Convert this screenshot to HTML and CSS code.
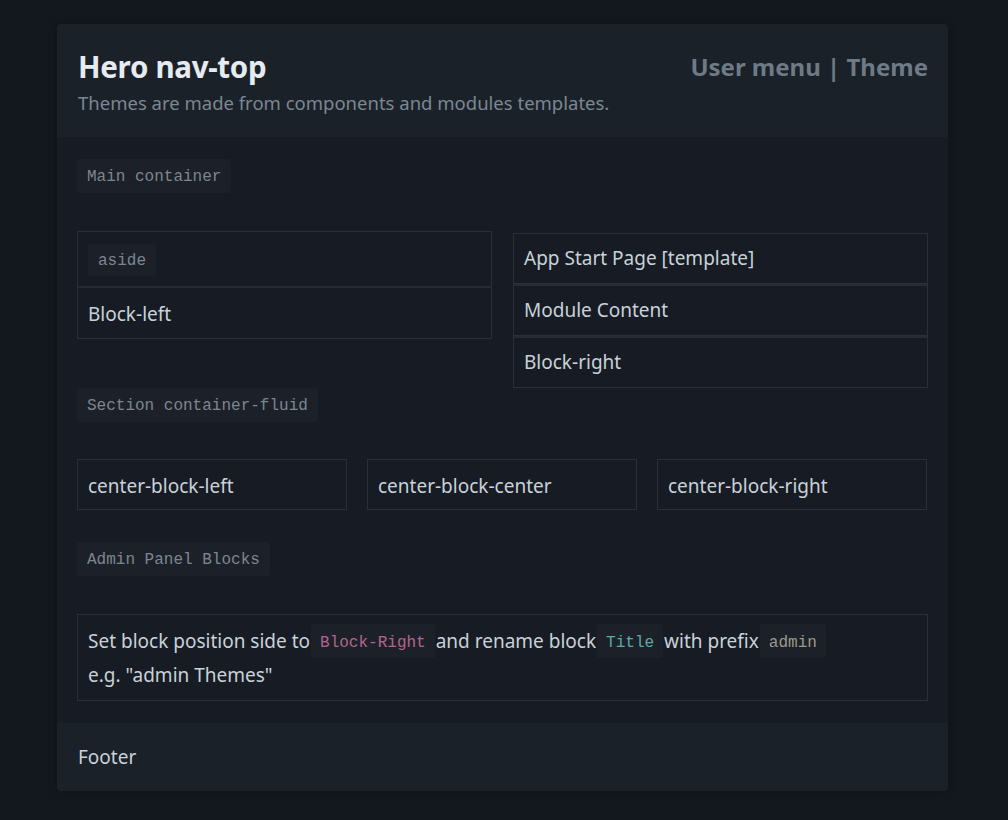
FILE: index.html
```html
<!DOCTYPE html>
<html>
<head>
<meta charset="utf-8">
<link rel="stylesheet" href="styles.css">
</head>
<body>
<div class="card">
  <header class="hero">
    <div class="hero-text">
      <h1 class="title">Hero nav-top</h1>
      <p class="subtitle">Themes are made from components and modules templates.</p>
    </div>
    <div class="user-menu">User menu | Theme</div>
  </header>
  <main class="main">
    <div class="label-row"><code class="chip">Main container</code></div>
    <div class="two-col">
      <div class="box">
        <div class="box-item aside-item"><code class="chip">aside</code></div>
        <div class="box-item">Block-left</div>
      </div>
      <div class="list">
        <div class="list-item">App Start Page [template]</div>
        <div class="list-item">Module Content</div>
        <div class="list-item">Block-right</div>
      </div>
    </div>
    <div class="label-row tight"><code class="chip">Section container-fluid</code></div>
    <div class="three-col">
      <div class="cell">center-block-left</div>
      <div class="cell">center-block-center</div>
      <div class="cell">center-block-right</div>
    </div>
    <div class="label-row"><code class="chip">Admin Panel Blocks</code></div>
    <div class="admin-box">
      Set block position side to<code class="chip inline pink">Block-Right</code>and rename block<code class="chip inline teal">Title</code>with prefix<code class="chip inline tan">admin</code><br>e.g. "admin Themes"
    </div>
  </main>
  <footer class="footer">Footer</footer>
</div>
</body>
</html>
```

FILE: styles.css
```css
* { box-sizing: border-box; }
html, body { margin: 0; padding: 0; }
body {
  background: #13181e;
  font-family: "Noto Sans", "Open Sans", sans-serif;
  color: #c9d1d9;
  padding: 24px 60px 30px 57px;
  min-height: 820px;
}
.card {
  width: 891px;
  border-radius: 4px;
  overflow: hidden;
  background: #171c24;
  box-shadow: 0 0 10px rgba(0,0,0,0.25);
}
.hero {
  background: #1b2129;
  height: 113px;
  padding: 24px 20px 0 21px;
  display: flex;
  justify-content: space-between;
  align-items: flex-start;
}
.title {
  margin: 0;
  font-size: 29.5px;
  font-weight: 700;
  line-height: 38px;
  color: #e6ebf0;
  letter-spacing: -0.3px;
}
.subtitle {
  margin: 4px 0 0;
  font-size: 18.5px;
  line-height: 26px;
  color: #7b8792;
}
.user-menu {
  font-size: 24px;
  font-weight: 700;
  line-height: 38px;
  color: #6e7b86;
}
.main {
  padding: 22px 20px 22px 20px;
}
.chip {
  display: inline-block;
  font-family: "Liberation Mono", "DejaVu Sans Mono", monospace;
  font-size: 16px;
  line-height: 37px;
  height: 34px;
  padding: 0 10px;
  background: #1c2129;
  color: #7d8690;
  border-radius: 3px;
}
.label-row { height: 34px; margin-bottom: 38px; }
.label-row.tight { margin-bottom: 37px; }
.two-col {
  display: grid;
  grid-template-columns: 415px 415px;
  column-gap: 21px;
  align-items: start;
}
.box {
  border: 1px solid #2a3039;
  margin-bottom: 49px;
}
.box-item {
  font-size: 19px;
  line-height: 50px;
  padding: 1px 10px 0;
  height: 50px;
  color: #c9d1d9;
}
.aside-item {
  height: 56px;
  padding-top: 12px;
  line-height: normal;
  border-bottom: 2px solid #252b34;
}
.aside-item .chip { height: 32px; line-height: 35px; }
.list { margin-top: 2px; }
.list-item {
  border: 1px solid #2a3039;
  font-size: 19px;
  line-height: 49px;
  padding: 0 10px;
  color: #c9d1d9;
}
.list-item + .list-item { border-top: 2px solid #262c35; }
.three-col {
  display: grid;
  grid-template-columns: 270px 270px 270px;
  column-gap: 20px;
  margin-bottom: 32px;
}
.cell {
  border: 1px solid #2a3039;
  height: 51px;
  line-height: 50px;
  padding: 1px 10px 0;
  font-size: 19px;
  color: #c9d1d9;
}
.admin-box {
  border: 1px solid #2a3039;
  padding: 9px 10px 10px 10px;
  font-size: 19px;
  line-height: 34px;
  color: #c9d1d9;
  height: 87px;
}
.chip.inline {
  height: 34px;
  line-height: 38px;
  padding: 0 9px;
  margin: 0 1px;
  vertical-align: top;
}
.pink { color: #b4648f; }
.teal { color: #5fa8a3; }
.tan { color: #a09788; }
.footer {
  background: #1b2129;
  height: 68px;
  line-height: 68px;
  padding: 0 21px;
  font-size: 19px;
  color: #c9d1d9;
}
```
